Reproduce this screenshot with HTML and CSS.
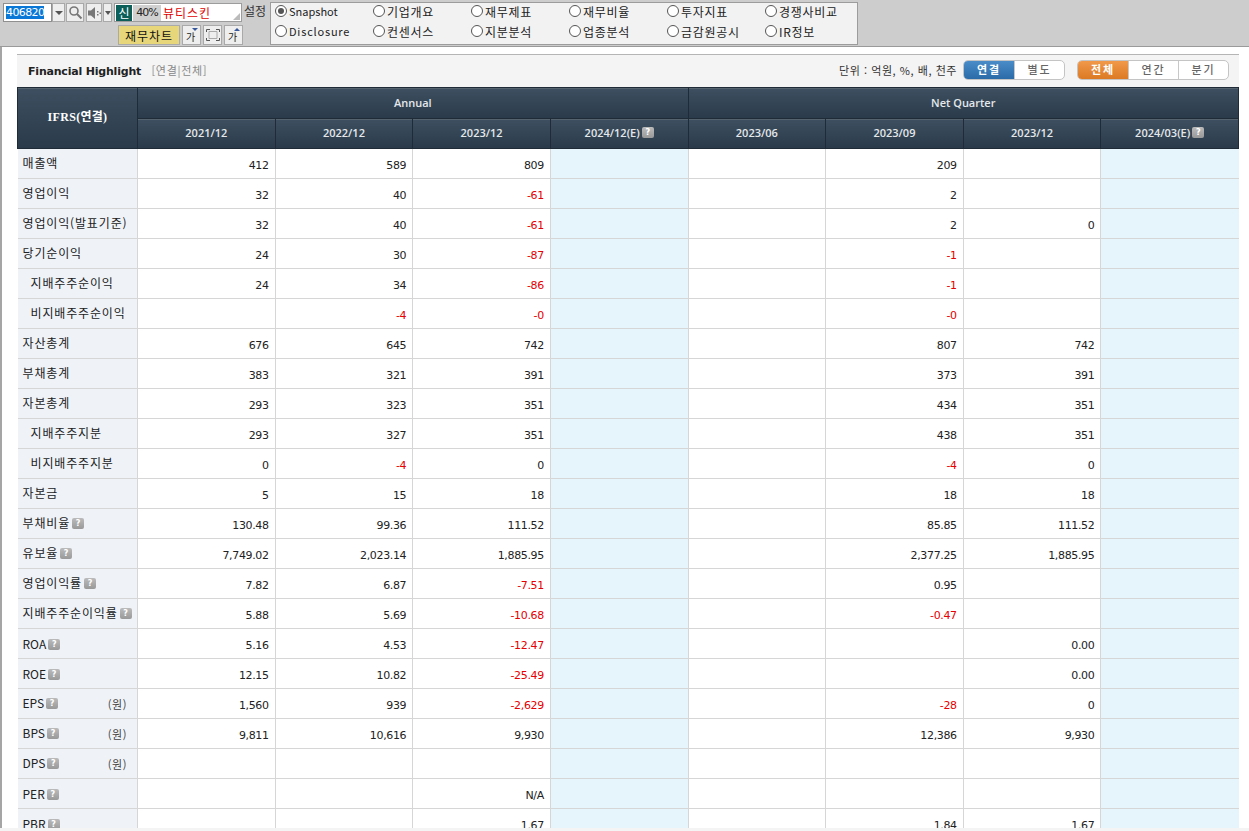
FILE: index.html
```html
<!DOCTYPE html>
<html lang="ko">
<head>
    <meta charset="UTF-8">
    <title>Financial Highlight</title>
    <link rel="stylesheet" href="styles.css">
</head>
<body>

    <!-- 상단 툴바 -->
    <div class="toolbar">
        <div class="search-block">
            <div class="search-row">
                <div class="code-box"><span class="code-sel">406820</span></div>
                <button class="tool-btn arrow-btn"><span class="arrow-down"></span></button>
                <button class="tool-btn icon-btn">
                    <svg width="15" height="15" viewBox="0 0 15 15"><circle cx="6" cy="6" r="4" fill="none" stroke="#777" stroke-width="1.6"/><path d="M9 9l4.500 4.500" stroke="#777" stroke-width="2"/></svg>
                </button>
                <button class="tool-btn icon-btn sound-btn">
                    <svg width="14" height="14" viewBox="0 0 14 14"><path d="M1 4.500h3L8 1v12L4 9.500H1z" fill="#777"/><path d="M10 5h1.500v1.500H10zM10 8h1.500v1.500H10zM12.500 6.500H14V8h-1.500z" fill="#777"/></svg>
                </button>
                <button class="tool-btn arrow-btn small-arrow"><span class="arrow-down"></span></button>
                <div class="name-box">
                    <span class="badge-new">신</span>
                    <span class="badge-rate">40%</span>
                    <span class="stock-name">뷰티스킨</span>
                    <span class="resize-mark"></span>
                </div>
            </div>
            <div class="action-row">
                <button class="chart-btn">재무차트</button>
                <button class="tool-btn font-btn glyph-btn">가<span class="mark-down"></span></button>
                <button class="tool-btn font-btn">
                    <svg width="14" height="12" viewBox="0 0 14 12"><path d="M3 2.500h8v7H3z" fill="none" stroke="#aaa"/><path d="M.5 3V.5H4M13.500 3V.5H10M.5 9v2.500H4M13.500 9v2.500H10" stroke="#555" fill="none"/></svg>
                </button>
                <button class="tool-btn font-btn glyph-btn">가<span class="mark-up"></span></button>
            </div>
        </div>
        <span class="setting-label">설정</span>
        <div class="radio-box">
            <label class="radio-item latin"><span class="radio on"></span>Snapshot</label>
            <label class="radio-item"><span class="radio"></span>기업개요</label>
            <label class="radio-item"><span class="radio"></span>재무제표</label>
            <label class="radio-item"><span class="radio"></span>재무비율</label>
            <label class="radio-item"><span class="radio"></span>투자지표</label>
            <label class="radio-item"><span class="radio"></span>경쟁사비교</label>
            <label class="radio-item latin spaced"><span class="radio"></span>Disclosure</label>
            <label class="radio-item"><span class="radio"></span>컨센서스</label>
            <label class="radio-item"><span class="radio"></span>지분분석</label>
            <label class="radio-item"><span class="radio"></span>업종분석</label>
            <label class="radio-item"><span class="radio"></span>금감원공시</label>
            <label class="radio-item"><span class="radio"></span>IR정보</label>
        </div>
    </div>

    <div class="content">
        <div class="panel">
            <div class="title-bar">
                <div class="title-left">
                    <span class="title">Financial Highlight</span>
                    <span class="title-sub">[연결|전체]</span>
                </div>
                <div class="title-right">
                    <span class="unit">단위 : 억원, %, 배, 천주</span>
                    <div class="seg">
                        <span class="seg-item blue">연결</span>
                        <span class="seg-item">별도</span>
                    </div>
                    <div class="seg seg-term">
                        <span class="seg-item orange">전체</span>
                        <span class="seg-item">연간</span>
                        <span class="seg-item">분기</span>
                    </div>
                </div>
            </div>

            <table class="fin-table">
                <colgroup>
                    <col class="col-label">
                    <col span="8">
                </colgroup>
                <thead>
                    <tr>
                        <th rowspan="2" class="ifrs">IFRS(연결)</th>
                        <th colspan="4">Annual</th>
                        <th colspan="4">Net Quarter</th>
                    </tr>
                    <tr>
                        <th>2021/12</th>
                        <th>2022/12</th>
                        <th>2023/12</th>
                        <th>2024/12(E)<span class="help">?</span></th>
                        <th>2023/06</th>
                        <th>2023/09</th>
                        <th>2023/12</th>
                        <th>2024/03(E)<span class="help">?</span></th>
                    </tr>
                </thead>
                <tbody>
                    <tr><th>매출액</th><td>412</td><td>589</td><td>809</td><td class="est"></td><td></td><td>209</td><td></td><td class="est"></td></tr>
                    <tr><th>영업이익</th><td>32</td><td>40</td><td class="neg">-61</td><td class="est"></td><td></td><td>2</td><td></td><td class="est"></td></tr>
                    <tr><th>영업이익(발표기준)</th><td>32</td><td>40</td><td class="neg">-61</td><td class="est"></td><td></td><td>2</td><td>0</td><td class="est"></td></tr>
                    <tr><th>당기순이익</th><td>24</td><td>30</td><td class="neg">-87</td><td class="est"></td><td></td><td class="neg">-1</td><td></td><td class="est"></td></tr>
                    <tr><th class="sub">지배주주순이익</th><td>24</td><td>34</td><td class="neg">-86</td><td class="est"></td><td></td><td class="neg">-1</td><td></td><td class="est"></td></tr>
                    <tr><th class="sub">비지배주주순이익</th><td></td><td class="neg">-4</td><td class="neg">-0</td><td class="est"></td><td></td><td class="neg">-0</td><td></td><td class="est"></td></tr>
                    <tr><th>자산총계</th><td>676</td><td>645</td><td>742</td><td class="est"></td><td></td><td>807</td><td>742</td><td class="est"></td></tr>
                    <tr><th>부채총계</th><td>383</td><td>321</td><td>391</td><td class="est"></td><td></td><td>373</td><td>391</td><td class="est"></td></tr>
                    <tr><th>자본총계</th><td>293</td><td>323</td><td>351</td><td class="est"></td><td></td><td>434</td><td>351</td><td class="est"></td></tr>
                    <tr><th class="sub">지배주주지분</th><td>293</td><td>327</td><td>351</td><td class="est"></td><td></td><td>438</td><td>351</td><td class="est"></td></tr>
                    <tr><th class="sub">비지배주주지분</th><td>0</td><td class="neg">-4</td><td>0</td><td class="est"></td><td></td><td class="neg">-4</td><td>0</td><td class="est"></td></tr>
                    <tr><th>자본금</th><td>5</td><td>15</td><td>18</td><td class="est"></td><td></td><td>18</td><td>18</td><td class="est"></td></tr>
                    <tr><th>부채비율<span class="help">?</span></th><td>130.48</td><td>99.36</td><td>111.52</td><td class="est"></td><td></td><td>85.85</td><td>111.52</td><td class="est"></td></tr>
                    <tr><th>유보율<span class="help">?</span></th><td>7,749.02</td><td>2,023.14</td><td>1,885.95</td><td class="est"></td><td></td><td>2,377.25</td><td>1,885.95</td><td class="est"></td></tr>
                    <tr><th>영업이익률<span class="help">?</span></th><td>7.82</td><td>6.87</td><td class="neg">-7.51</td><td class="est"></td><td></td><td>0.95</td><td></td><td class="est"></td></tr>
                    <tr><th>지배주주순이익률<span class="help">?</span></th><td>5.88</td><td>5.69</td><td class="neg">-10.68</td><td class="est"></td><td></td><td class="neg">-0.47</td><td></td><td class="est"></td></tr>
                    <tr><th class="abbr">ROA<span class="help">?</span></th><td>5.16</td><td>4.53</td><td class="neg">-12.47</td><td class="est"></td><td></td><td></td><td>0.00</td><td class="est"></td></tr>
                    <tr><th class="abbr">ROE<span class="help">?</span></th><td>12.15</td><td>10.82</td><td class="neg">-25.49</td><td class="est"></td><td></td><td></td><td>0.00</td><td class="est"></td></tr>
                    <tr><th class="abbr">EPS<span class="help">?</span><span class="won">(원)</span></th><td>1,560</td><td>939</td><td class="neg">-2,629</td><td class="est"></td><td></td><td class="neg">-28</td><td>0</td><td class="est"></td></tr>
                    <tr><th class="abbr">BPS<span class="help">?</span><span class="won">(원)</span></th><td>9,811</td><td>10,616</td><td>9,930</td><td class="est"></td><td></td><td>12,386</td><td>9,930</td><td class="est"></td></tr>
                    <tr><th class="abbr">DPS<span class="help">?</span><span class="won">(원)</span></th><td></td><td></td><td></td><td class="est"></td><td></td><td></td><td></td><td class="est"></td></tr>
                    <tr><th class="abbr">PER<span class="help">?</span></th><td></td><td></td><td>N/A</td><td class="est"></td><td></td><td></td><td></td><td class="est"></td></tr>
                    <tr><th class="abbr">PBR<span class="help">?</span></th><td></td><td></td><td>1.67</td><td class="est"></td><td></td><td>1.84</td><td>1.67</td><td class="est"></td></tr>
                </tbody>
            </table>
        </div>
    </div>

</body>
</html>
```

FILE: styles.css
```css
html, body {
    margin: 0;
    padding: 0;
    height: 831px;
    overflow: hidden;
}
body {
    font-family: "Noto Sans CJK KR", "Liberation Sans", sans-serif;
    font-size: 12px;
    color: #222;
    background: #f4f4f4;
}
button {
    font-family: inherit;
    margin: 0;
    padding: 0;
}

/* 상단 툴바 */
.toolbar {
    height: 47px;
    box-sizing: border-box;
    background: #cdcdcd;
    border-bottom: 1px solid #9a9a9a;
    display: flex;
    padding: 3px 0 0 3px;
}
.search-block {
    width: 240px;
    display: flex;
    flex-direction: column;
    gap: 3px;
}
.search-row {
    display: flex;
    height: 19px;
}
.code-box {
    width: 49px;
    box-sizing: border-box;
    background: #fff;
    border: 1px solid #8f8f8f;
    padding: 1px 0 0 2px;
    height: 19px;
    line-height: 15px;
    font-family: "DejaVu Sans", sans-serif;
    font-size: 11px;
    letter-spacing: -0.6px;
}
.code-sel {
    background: #0a78d7;
    color: #fff;
}
.tool-btn {
    box-sizing: border-box;
    background: #eee;
    border: 1px solid #a9a9a9;
    height: 19px;
    display: flex;
    align-items: center;
    justify-content: center;
    position: relative;
}
.arrow-btn {
    width: 13px;
}
.icon-btn {
    width: 18px;
    margin-left: 1px;
}
.sound-btn {
    margin-left: 2px;
    width: 16px;
}
.small-arrow {
    width: 9px;
    margin-left: 1px;
}
.arrow-down {
    width: 0;
    height: 0;
    border-left: 4px solid transparent;
    border-right: 4px solid transparent;
    border-top: 4px solid #555;
}
.small-arrow .arrow-down {
    border-left-width: 3px;
    border-right-width: 3px;
}
.name-box {
    position: relative;
    width: 128px;
    box-sizing: border-box;
    margin-left: 2px;
    background: #fff;
    border: 1px solid #9c9c9c;
    display: flex;
    align-items: center;
    height: 19px;
    padding-left: 1px;
}
.badge-new {
    width: 16px;
    height: 16px;
    background: #0d5f5a;
    color: #fff;
    text-align: center;
    line-height: 15px;
    font-size: 12px;
}
.badge-rate {
    width: 28px;
    height: 16px;
    margin-left: 1px;
    background: #d0d0d0;
    text-align: center;
    font-family: "DejaVu Sans", sans-serif;
    font-size: 11px;
    letter-spacing: -1px;
    line-height: 16px;
}
.stock-name {
    color: #e00000;
    font-size: 12px;
    letter-spacing: 1px;
    padding-left: 2px;
    line-height: 16px;
}
.resize-mark {
    position: absolute;
    right: 1px;
    bottom: 1px;
    width: 0;
    height: 0;
    border-left: 7px solid transparent;
    border-bottom: 7px solid #bbb;
}
.action-row {
    display: flex;
    justify-content: flex-end;
    gap: 2px;
}
.chart-btn {
    width: 62px;
    height: 20px;
    box-sizing: border-box;
    background: #e7d77a;
    border: 1px solid #aaa;
    font-size: 12px;
    letter-spacing: 1px;
    color: #111;
}
.font-btn {
    width: 19px;
    height: 20px;
    font-size: 10px;
    color: #222;
}
.glyph-btn {
    align-items: flex-end;
    justify-content: flex-start;
    padding-left: 3px;
    line-height: 14px;
}
.mark-down, .mark-up {
    position: absolute;
    top: 2px;
    right: 2px;
    width: 0;
    height: 0;
    border-left: 3px solid transparent;
    border-right: 3px solid transparent;
}
.mark-down {
    border-top: 3px solid #35579a;
}
.mark-up {
    border-bottom: 3px solid #35579a;
}
.setting-label {
    width: 27px;
    padding-left: 1px;
    box-sizing: border-box;
    color: #333;
    line-height: 15px;
    font-size: 12px;
}
.radio-box {
    box-sizing: border-box;
    width: 588px;
    height: 43px;
    margin-top: -1px;
    background: #f2f2f2;
    border: 1px solid #9c9c9c;
    display: grid;
    grid-template-columns: repeat(6, 98px);
    grid-template-rows: 16px 24px;
    padding: 0 0 0 4px;
}
.radio-item {
    display: flex;
    align-items: center;
    gap: 2px;
    font-size: 12px;
    letter-spacing: 0.7px;
    color: #222;
    white-space: nowrap;
}
.radio-item.latin {
    font-size: 11px;
    letter-spacing: 0;
}
.radio-item.spaced {
    letter-spacing: 0.8px;
}
.radio {
    width: 10px;
    height: 10px;
    border: 1px solid #555;
    border-radius: 50%;
    background: #fff;
    display: inline-block;
    position: relative;
}
.radio.on::after {
    content: "";
    position: absolute;
    left: 2px;
    top: 2px;
    width: 6px;
    height: 6px;
    border-radius: 50%;
    background: #555;
}

/* 본문 */
.content {
    background: #fff;
    height: 781px;
    box-sizing: border-box;
    padding: 7px 10px 0 15px;
    border-left: 2px solid #a5a5a5;
    overflow: hidden;
}
.panel {
    height: 774px;
    overflow: hidden;
    background: #f4f4f4;
    border-top: 1px solid #b5b5b5;
}
.title-bar {
    height: 32px;
    display: flex;
    align-items: center;
    justify-content: space-between;
    padding: 0 10px 2px 11px;
    box-sizing: border-box;
}
.title-left {
    padding-bottom: 2px;
}
.title {
    font-family: "DejaVu Sans", sans-serif;
    font-weight: bold;
    font-size: 11px;
    letter-spacing: -0.2px;
    color: #222;
}
.title-sub {
    color: #888;
    font-size: 11px;
    margin-left: 7px;
    letter-spacing: 0.7px;
}
.title-right {
    display: flex;
    align-items: center;
}
.unit {
    font-size: 11px;
    color: #333;
    letter-spacing: 0.55px;
    margin-right: 6px;
}
.seg {
    display: flex;
    height: 20px;
    box-sizing: border-box;
    border: 1px solid #c4c4c4;
    border-radius: 5px;
    background: #fff;
    overflow: hidden;
}
.seg-term {
    margin-left: 12px;
}
.seg-item {
    width: 50px;
    box-sizing: border-box;
    text-align: center;
    line-height: 17px;
    font-size: 11px;
    font-weight: 500;
    letter-spacing: 2px;
    color: #666;
    border-left: 1px solid #c8c8c8;
}
.seg-item:first-child {
    border-left: none;
}
.seg-item.blue {
    background: linear-gradient(#4a8cc8, #2a6ba8);
    color: #fff;
    font-weight: bold;
}
.seg-item.orange {
    background: linear-gradient(#f0984a, #dc7a24);
    color: #fff;
    font-weight: bold;
}

/* 표 */
.fin-table {
    width: 1222px;
    table-layout: fixed;
    border-collapse: collapse;
    background: #fff;
}
.col-label {
    width: 120px;
}
.fin-table thead th {
    background: linear-gradient(#3d4f60, #2a3a4a);
    color: #e4e8eb;
    font-family: "Open Sans", sans-serif;
    font-size: 11px;
    font-weight: 600;
    height: 28px;
    padding: 0 0 2px;
    border: 1px solid #1f2b36;
    box-shadow: inset 0 1px 0 #55636f;
}
.fin-table thead tr:last-child th {
    height: 27px;
}
.fin-table thead th.ifrs {
    color: #fff;
    font-family: "Liberation Serif", "Noto Sans CJK KR", serif;
    font-size: 12px;
    font-weight: bold;
    letter-spacing: 0.3px;
    padding-bottom: 4px;
}
.fin-table tbody tr {
    height: 30px;
}
.fin-table tbody th {
    background: #eff3f8;
    font-weight: normal;
    text-align: left;
    font-size: 12px;
    letter-spacing: 0.85px;
    padding: 0 0 3px 5px;
    color: #222;
    white-space: nowrap;
    border: 1px solid #d6d6d6;
    border-left: none;
}
.fin-table tbody th.sub {
    padding-left: 13px;
}
.fin-table tbody th.abbr {
    letter-spacing: 0;
    padding-bottom: 1px;
}
.fin-table td {
    font-family: "DejaVu Sans", sans-serif;
    font-size: 11px;
    letter-spacing: -0.35px;
    text-align: right;
    padding: 4px 6px 0 0;
    border: 1px solid #d6d6d6;
    color: #222;
}
.fin-table td.est {
    background: #e6f5fb;
    border-right: none;
}
.fin-table td.neg {
    color: #e60000;
}
.help {
    display: inline-block;
    width: 12px;
    height: 11px;
    margin-left: 2px;
    background: linear-gradient(#bbb, #999);
    border-radius: 2px;
    color: #fff;
    font-family: "DejaVu Sans", sans-serif;
    font-size: 8px;
    font-weight: bold;
    line-height: 11px;
    text-align: center;
    vertical-align: 2px;
    letter-spacing: 0;
}
.won {
    float: right;
    margin: 2px 10px 0 0;
    color: #444;
    font-size: 11px;
    letter-spacing: 0.6px;
}
```
